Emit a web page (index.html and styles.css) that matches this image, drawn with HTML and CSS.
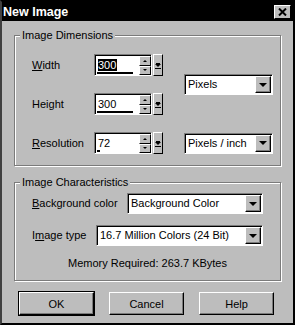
FILE: index.html
```html
<html>
<head>
<meta charset="UTF-8">
<title>New Image</title>
<link rel="stylesheet" href="styles.css">
</head>
<body>
<div class="dialog">
	<div class="titlebar">
		<span class="title">New Image</span>
		<span class="close">
			<svg width="9" height="8" viewBox="0 0 9 8"><path d="M1 0.5L8 7.5M8 0.5L1 7.5" stroke="#000" stroke-width="2"/></svg>
		</span>
	</div>
	<div class="content">
		<div class="group dims">
			<span class="group-title">Image Dimensions</span>
			<div class="dim-grid">
				<span class="lbl"><u>W</u>idth</span>
				<div class="spin">
					<div class="spin-box">
						<div class="spin-input"><span class="sel">300</span><i class="spin-bar" style="width:36px"></i></div>
						<div class="spin-btns">
							<span class="sbtn"><i class="tri-up"></i></span>
							<span class="sbtn"><i class="tri-down"></i></span>
						</div>
					</div>
					<span class="step"><i class="step-ico"></i></span>
				</div>
				<div class="combo units"><span class="combo-text">Pixels</span><span class="arrow"><i class="tri-down big"></i></span></div>

				<span class="lbl">Hei<u>g</u>ht</span>
				<div class="spin">
					<div class="spin-box">
						<div class="spin-input">300<i class="spin-bar" style="width:36px"></i></div>
						<div class="spin-btns">
							<span class="sbtn"><i class="tri-up"></i></span>
							<span class="sbtn"><i class="tri-down"></i></span>
						</div>
					</div>
					<span class="step"><i class="step-ico"></i></span>
				</div>

				<span class="lbl"><u>R</u>esolution</span>
				<div class="spin">
					<div class="spin-box">
						<div class="spin-input">72<i class="spin-bar" style="width:3px"></i></div>
						<div class="spin-btns">
							<span class="sbtn"><i class="tri-up"></i></span>
							<span class="sbtn"><i class="tri-down"></i></span>
						</div>
					</div>
					<span class="step"><i class="step-ico"></i></span>
				</div>
				<div class="combo"><span class="combo-text">Pixels / inch</span><span class="arrow"><i class="tri-down big"></i></span></div>
			</div>
		</div>

		<div class="group chars">
			<span class="group-title">Image Characteristics</span>
			<div class="row">
				<span class="lbl"><u>B</u>ackground color</span>
				<div class="combo bg"><span class="combo-text">Background Color</span><span class="arrow"><i class="tri-down big"></i></span></div>
			</div>
			<div class="row">
				<span class="lbl">I<u>m</u>age type</span>
				<div class="combo type"><span class="combo-text">16.7 Million Colors (24 Bit)</span><span class="arrow"><i class="tri-down big"></i></span></div>
			</div>
			<div class="memory">Memory Required: 263.7 KBytes</div>
		</div>

		<div class="buttons">
			<span class="btn default">OK</span>
			<span class="btn">Cancel</span>
			<span class="btn">Help</span>
		</div>
	</div>
</div>
</body>
</html>
```

FILE: styles.css
```css
body{
	margin: 0;
	font-family: "Liberation Sans", Arial, sans-serif;
	font-size: 11px;
	color: #000;
}
.dialog{
	width: 295px;
	height: 325px;
	box-sizing: border-box;
	background: #bdbdbd;
	border: 2px solid;
	border-color: #000 #000 #000 #404040;
	display: flex;
	flex-direction: column;
}
.titlebar{
	height: 19px;
	background: #000;
	display: flex;
	align-items: center;
	justify-content: space-between;
	padding: 0 2px 0 1px;
}
.title{
	color: #fff;
	font-weight: bold;
	font-size: 12.5px;
}
.close{
	width: 15px;
	height: 12px;
	background: #bdbdbd;
	border: 1px solid;
	border-color: #fff #000 #000 #fff;
	display: flex;
	align-items: center;
	justify-content: center;
}
.content{
	padding: 14px 12px 0 12px;
}

/* group boxes */
.group{
	position: relative;
	border: 1px solid #7b7b7b;
	box-shadow: inset 1px 1px #fff, 1px 1px #fff;
}
.group-title{
	position: absolute;
	top: -7px;
	left: 5px;
	padding: 0 2px;
	line-height: 13px;
	background: #bdbdbd;
}
.dims{
	height: 129px;
	padding: 18px 0 0 17px;
	box-sizing: border-box;
	height: 131px;
}
.chars{
	margin-top: 16px;
	height: 99px;
	box-sizing: border-box;
	padding: 10px 17px 0 17px;
}
.dim-grid{
	display: grid;
	grid-template-columns: 62px 90px 89px;
	grid-template-rows: 22px 22px 22px;
	row-gap: 17px;
	align-items: center;
}
.units{
	grid-column: 3;
	grid-row: 1 / 3;
}
.lbl{
	line-height: 13px;
}

/* spinner */
.spin{
	display: flex;
	height: 22px;
	width: 69px;
}
.spin-box{
	width: 59px;
	box-sizing: border-box;
	border: 1px solid;
	border-color: #7b7b7b #fff #fff #7b7b7b;
	box-shadow: inset 1px 1px #000;
	display: flex;
	padding: 1px 0 0 1px;
}
.spin-input{
	flex: 1;
	background: #fff;
	position: relative;
	padding: 3px 0 0 2px;
	line-height: 13px;
}
.sel{
	background: #000;
	color: #fff;
	padding-right: 1px;
}
.spin-bar{
	position: absolute;
	left: 1px;
	bottom: 1px;
	height: 2px;
	background: #000;
}
.spin-btns{
	width: 12px;
	display: flex;
	flex-direction: column;
}
.sbtn{
	flex: 1;
	background: #bdbdbd;
	border: 1px solid;
	border-color: #fff #000 #000 #fff;
	display: flex;
	align-items: center;
	justify-content: center;
}
.step{
	width: 8px;
	margin-left: 1px;
	background: #bdbdbd;
	border: 1px solid;
	border-color: #fff #000 #000 #fff;
	display: flex;
	align-items: center;
	justify-content: center;
}
.step-ico{
	width: 0;
	height: 0;
	border-left: 3px solid transparent;
	border-right: 3px solid transparent;
	border-top: 3px solid #000;
	border-bottom: 0;
	box-shadow: 0 -2px 0 -1px #000;
	position: relative;
}
.step-ico:after{
	content: "";
	position: absolute;
	left: -3px;
	top: 1px;
	width: 6px;
	height: 1px;
	background: #000;
}
.tri-up, .tri-down{
	width: 0;
	height: 0;
	border-left: 2px solid transparent;
	border-right: 2px solid transparent;
}
.tri-up{
	border-bottom: 2px solid #000;
}
.tri-down{
	border-top: 2px solid #000;
}
.tri-down.big{
	border-left-width: 4px;
	border-right-width: 4px;
	border-top-width: 4px;
}

/* combo boxes */
.combo{
	height: 21px;
	box-sizing: border-box;
	border: 1px solid;
	border-color: #7b7b7b #fff #fff #7b7b7b;
	box-shadow: inset 1px 1px #000;
	background: #fff;
	display: flex;
	padding: 1px 1px 1px 1px;
}
.combo-text{
	flex: 1;
	padding-left: 2px;
	line-height: 17px;
	white-space: nowrap;
	overflow: hidden;
}
.arrow{
	width: 14px;
	background: #bdbdbd;
	border: 1px solid;
	border-color: #fff #000 #000 #fff;
	box-shadow: inset -1px -1px #7b7b7b;
	display: flex;
	align-items: center;
	justify-content: center;
}

.row{
	display: flex;
	align-items: center;
	margin-bottom: 11px;
}
.row .combo{
	margin-left: auto;
}
.bg{
	width: 136px;
}
.type{
	width: 167px;
}
.memory{
	text-align: center;
	margin-top: 3px;
	line-height: 13px;
}

/* buttons */
.buttons{
	display: flex;
	gap: 15px;
	margin: 11px 0 0 5px;
}
.btn{
	width: 75px;
	height: 23px;
	box-sizing: border-box;
	background: #bdbdbd;
	border: 1px solid;
	border-color: #fff #000 #000 #fff;
	box-shadow: inset -1px -1px #7b7b7b;
	display: flex;
	align-items: center;
	justify-content: center;
}
.btn.default{
	outline: 1px solid #000;
	border-color: #fff #000 #000 #fff;
	box-shadow: inset -1px -1px #7b7b7b, inset 0 0 0 0 #000;
}
```
